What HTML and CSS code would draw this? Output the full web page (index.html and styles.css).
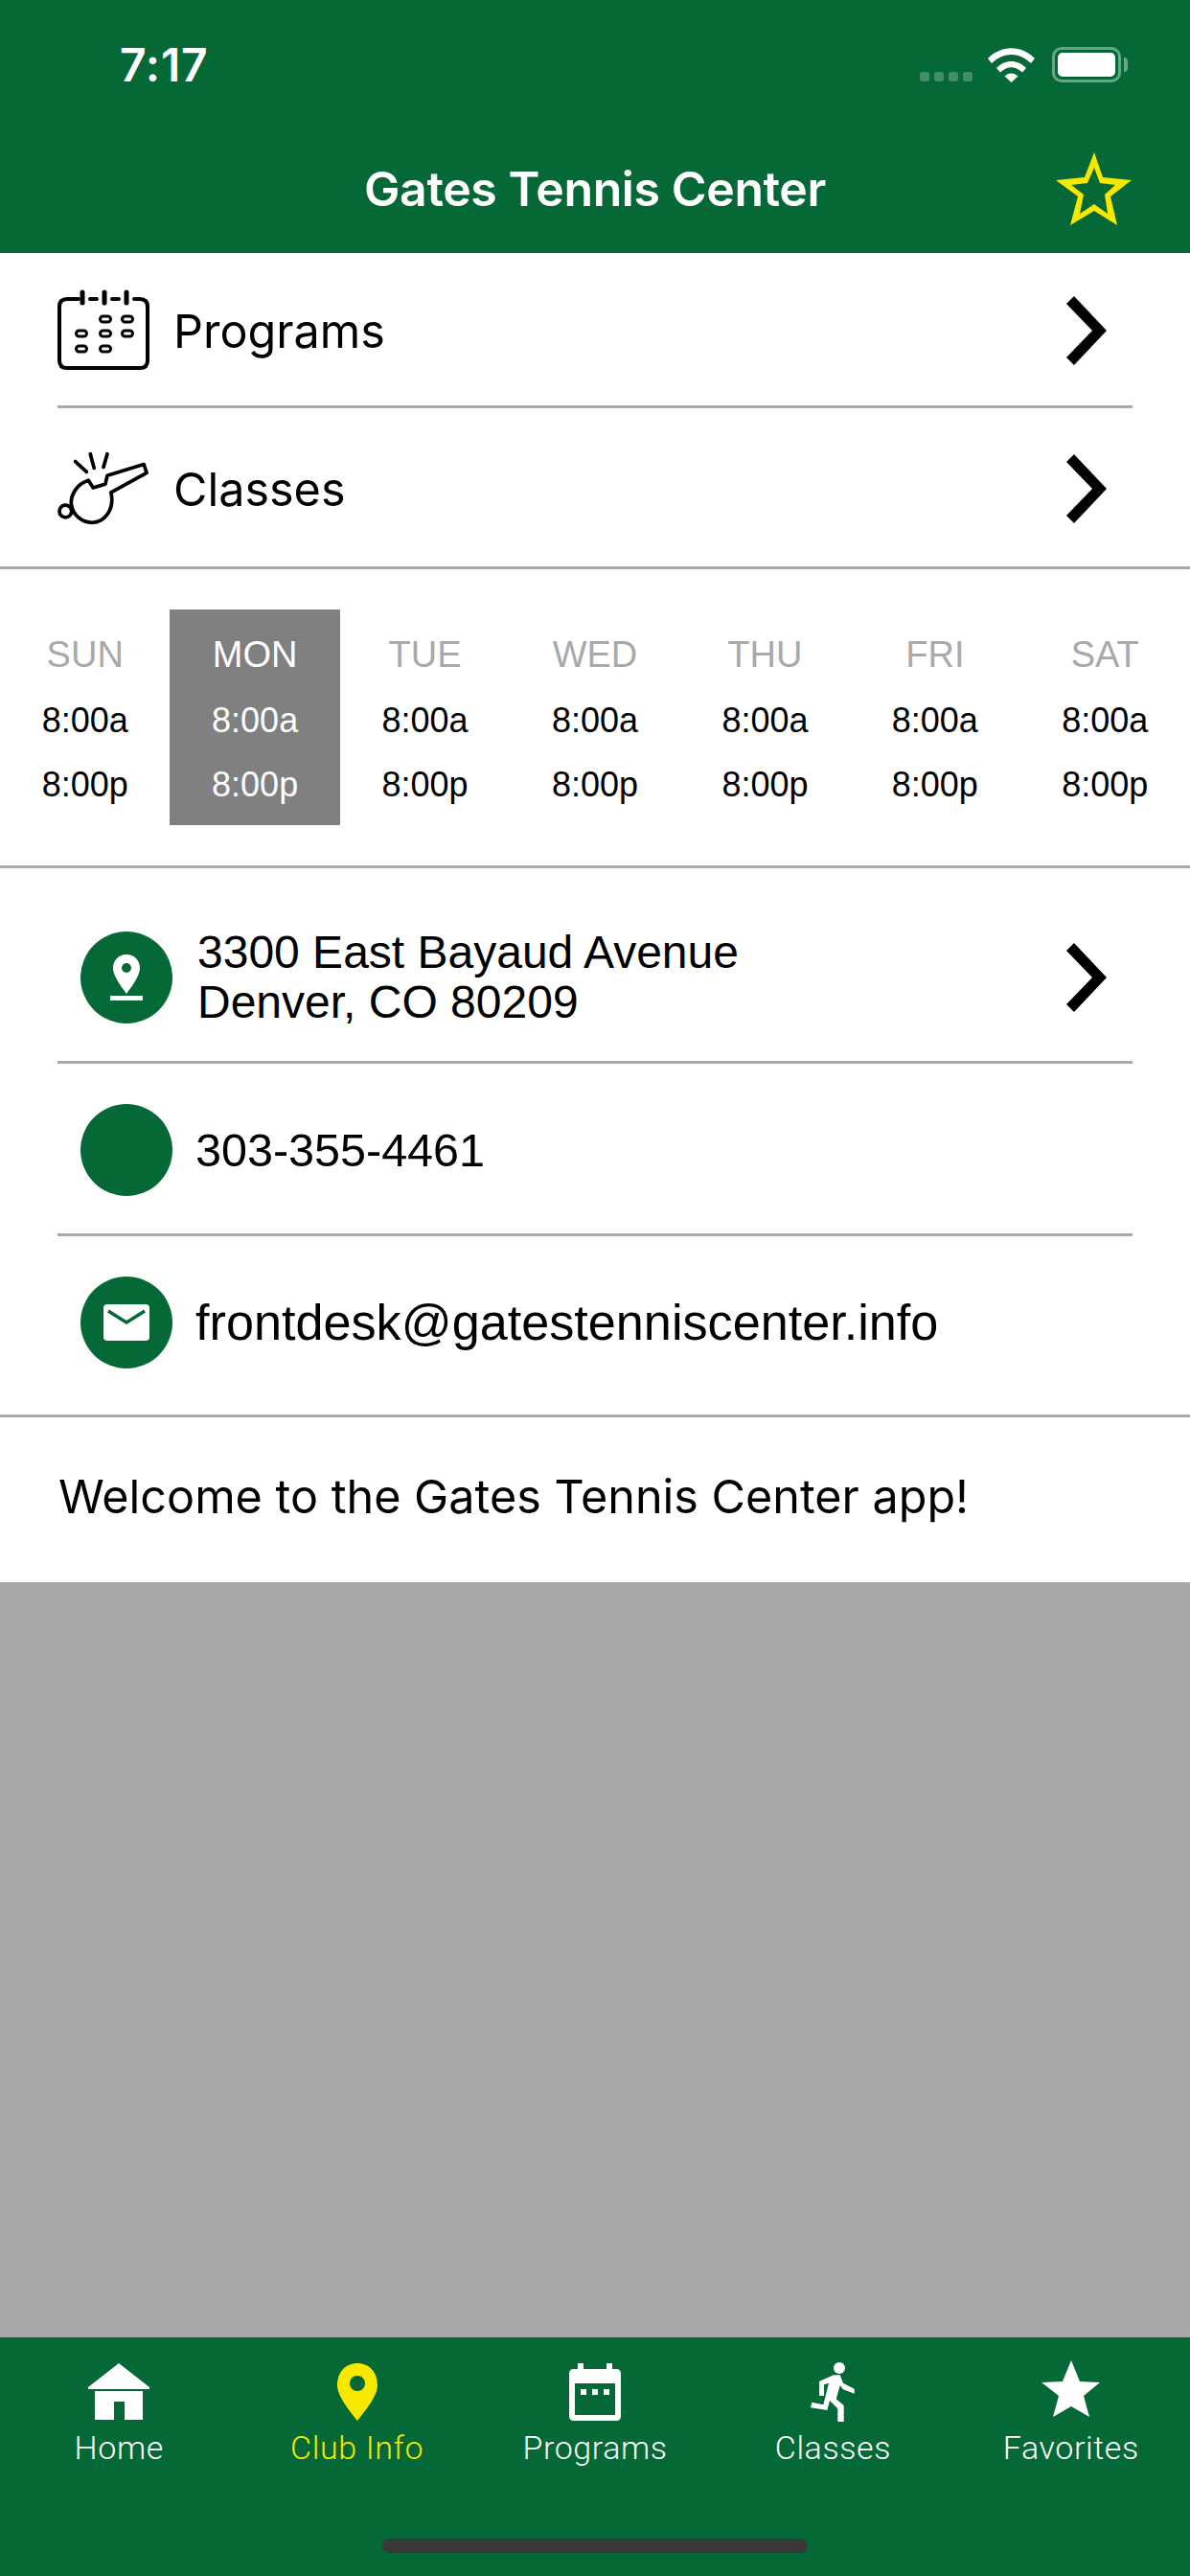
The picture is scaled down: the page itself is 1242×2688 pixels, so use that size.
FILE: index.html
```html
<!DOCTYPE html>
<html lang="en">

<head>
    <meta charset="UTF-8">
    <meta name="viewport" content="width=device-width, initial-scale=1.0">
    <title>Gates Tennis Center</title>
    <link rel="stylesheet" href="styles.css">
</head>

<body>

    <div class="app">
        <header class="header">
            <div class="status">
                <span class="status__time">7:17</span>
                <div class="status__icons">
                    <div class="signal"><i></i><i></i><i></i><i></i></div>
                    <svg class="wifi" width="49" height="36" viewBox="0 0 49 36">
                        <path fill="#fff" d="M0 11 C14 -3.500 35 -3.500 49 11 L45 16 C32 4 17 4 4 16Z M9 21 C18 11.500 31 11.500 40 21 L36 25.500 C28 18.500 21 18.500 13 25.500Z M17.500 29.500 C22 25.500 27 25.500 31.500 29.500 L24.500 36Z"/>
                    </svg>
                    <div class="battery"><div class="battery__level"></div></div>
                </div>
            </div>
            <div class="navbar">
                <h1 class="navbar__title">Gates Tennis Center</h1>
                <svg class="navbar__star" width="80" height="76" viewBox="0 0 80 76">
                    <path fill="#f7e800" fill-rule="evenodd" d="M40 0 L49 26 L79 29 L57 46 L64 76 L40 61 L15 76 L23 46 L0 29 L30 26Z M40 16 L46 32 L62 34 L51 44 L54 64 L40 54 L25 64 L29 44 L16 34 L33 32Z"/>
                </svg>
            </div>
        </header>

        <section class="links">
            <a class="links__row links__row--first">
                <svg class="links__icon" width="96" height="86" viewBox="0 0 96 86" fill="none" stroke="#000" stroke-linecap="round">
                    <path stroke-width="4" d="M22 10 H10 Q2 10 2 18 V74 Q2 82 10 82 H86 Q94 82 94 74 V18 Q94 10 86 10 H80"/>
                    <path stroke-width="4" d="M34 10 H41 M57 10 H64"/>
                    <path stroke-width="5" d="M26 3 V14 M49 3 V14 M72 3 V14"/>
                    <g stroke-width="3">
                        <rect x="44.500" y="28" width="11" height="6" rx="3"/>
                        <rect x="67.500" y="28" width="11" height="6" rx="3"/>
                        <rect x="19.500" y="43" width="11" height="6" rx="3"/>
                        <rect x="44.500" y="43" width="11" height="6" rx="3"/>
                        <rect x="67.500" y="43" width="11" height="6" rx="3"/>
                        <rect x="19.500" y="59" width="11" height="6" rx="3"/>
                        <rect x="44.500" y="59" width="11" height="6" rx="3"/>
                    </g>
                </svg>
                <span class="links__label">Programs</span>
                <svg class="chevron" width="42" height="72" viewBox="0 0 42 72"><path d="M8 0 L42 36 L8 72 L0 64 L27 36 L0 8Z"/></svg>
            </a>
            <div class="divider"></div>
            <a class="links__row">
                <svg class="links__icon" width="96" height="78" viewBox="0 0 98 78" fill="none" stroke="#000" stroke-width="3.800" stroke-linejoin="round" stroke-linecap="round">
                    <circle cx="8.500" cy="63" r="6.500"/>
                    <path d="M33 30 C20 34 13 47 15 57 C17 68 27 75 37 75 C51 75 61 60 57 43 L95 22 L92 13 L53 25 L51 34 L38 38 Z"/>
                    <path d="M19 10 L31 21 M35 2 L39 17 M53 2 L49 16"/>
                </svg>
                <span class="links__label">Classes</span>
                <svg class="chevron" width="42" height="72" viewBox="0 0 42 72"><path d="M8 0 L42 36 L8 72 L0 64 L27 36 L0 8Z"/></svg>
            </a>
        </section>

        <section class="hours">
            <div class="hours__day"><span class="hours__name">SUN</span><span>8:00a</span><span>8:00p</span></div>
            <div class="hours__day hours__day--today"><span class="hours__name">MON</span><span>8:00a</span><span>8:00p</span></div>
            <div class="hours__day"><span class="hours__name">TUE</span><span>8:00a</span><span>8:00p</span></div>
            <div class="hours__day"><span class="hours__name">WED</span><span>8:00a</span><span>8:00p</span></div>
            <div class="hours__day"><span class="hours__name">THU</span><span>8:00a</span><span>8:00p</span></div>
            <div class="hours__day"><span class="hours__name">FRI</span><span>8:00a</span><span>8:00p</span></div>
            <div class="hours__day"><span class="hours__name">SAT</span><span>8:00a</span><span>8:00p</span></div>
        </section>

        <section class="contact">
            <div class="contact__row">
                <div class="contact__circle">
                    <svg width="34" height="48" viewBox="0 0 34 48">
                        <path fill="#fff" fill-rule="evenodd" d="M17 0 C8 0 3 7 3 14 C3 22 11 33 17 41 C23 33 31 22 31 14 C31 7 26 0 17 0Z M17 9 A5 5 0 1 1 17 19 A5 5 0 1 1 17 9Z"/>
                        <rect x="0" y="43" width="34" height="5" fill="#fff"/>
                    </svg>
                </div>
                <div class="contact__text contact__text--address">3300 East Bayaud Avenue<br>Denver, CO 80209</div>
                <svg class="chevron" width="42" height="72" viewBox="0 0 42 72"><path d="M8 0 L42 36 L8 72 L0 64 L27 36 L0 8Z"/></svg>
            </div>
            <div class="divider"></div>
            <div class="contact__row">
                <div class="contact__circle"></div>
                <div class="contact__text contact__text--phone">303-355-4461</div>
            </div>
            <div class="divider"></div>
            <div class="contact__row">
                <div class="contact__circle">
                    <svg width="48" height="38" viewBox="0 0 48 38">
                        <rect width="48" height="38" rx="4" fill="#fff"/>
                        <path fill="none" stroke="#056937" stroke-width="3.500" d="M5 7 L24 19 L43 7"/>
                    </svg>
                </div>
                <div class="contact__text contact__text--mail">frontdesk@gatestenniscenter.info</div>
            </div>
        </section>

        <section class="welcome">Welcome to the Gates Tennis Center app!</section>

        <div class="filler"></div>

        <nav class="tabs">
            <div class="tabs__row">
                <a class="tabs__item">
                    <svg width="66" height="64" viewBox="0 -3 66 64">
                        <path fill="#fff" d="M33 0 L65 25 V27 H1 V25Z M8 29 H58 V59 H39 V40 H28 V59 H8Z"/>
                    </svg>
                    <span>Home</span>
                </a>
                <a class="tabs__item tabs__item--active">
                    <svg width="42" height="64" viewBox="0 -3 42 64">
                        <path fill="#f7e800" fill-rule="evenodd" d="M21 0 C9 0 0 9 0 23 C0 34 13 50 21 60 C29 50 42 34 42 23 C42 9 33 0 21 0Z M21 13 C25.500 13 29 16.500 29 21 C29 25.500 25.500 29 21 29 C16.500 29 13 25.500 13 21 C13 16.500 16.500 13 21 13Z"/>
                    </svg>
                    <span>Club Info</span>
                </a>
                <a class="tabs__item">
                    <svg width="54" height="64" viewBox="0 -3 54 64">
                        <path fill="#fff" fill-rule="evenodd" d="M9 0 H15 V6 H39 V0 H45 V6 H49 Q54 6 54 11 V55 Q54 60 49 60 H5 Q0 60 0 55 V11 Q0 6 5 6 H9Z M6 21 V54 H48 V21Z"/>
                        <path fill="#fff" d="M12 27 H18 V33 H12Z M24 27 H30 V33 H24Z M36 27 H42 V33 H36Z"/>
                    </svg>
                    <span>Programs</span>
                </a>
                <a class="tabs__item">
                    <svg width="46" height="64" viewBox="0 0 46 64">
                        <circle cx="30" cy="8" r="6" fill="#fff"/>
                        <path fill="#fff" d="M9 22 L24 15.300 H30.700 L34 23.700 L45.700 29.700 V34.700 L34 30.300 L30.700 26.300 L26.700 40.300 L34.700 47 V64 H28.300 V50.300 L20 42 L17.300 52 L0 49.300 L1.300 43.700 L13.300 46.300 L19 23.700 L14 25.300 V37 H9Z"/>
                    </svg>
                    <span>Classes</span>
                </a>
                <a class="tabs__item">
                    <svg width="62" height="64" viewBox="0 0 62 64">
                        <path fill="#fff" d="M31 0 L40 22 L61 23 L44 37 L50 59 L31 48 L12 59 L18 37 L0 23 L22 22Z"/>
                    </svg>
                    <span>Favorites</span>
                </a>
            </div>
            <div class="tabs__indicator"></div>
        </nav>
    </div>

</body>

</html>
```

FILE: styles.css
```css
/* CSS Reset */
html {
    box-sizing: border-box;
}

*,
*:before,
*:after {
    box-sizing: inherit;
}

body,
h1 {
    margin: 0;
    padding: 0;
    font-weight: normal;
}

body {
    font-family: "Inter", "Liberation Sans", sans-serif;
    color: #000;
}

svg {
    display: block;
    flex-shrink: 0;
}

.app {
    display: flex;
    flex-direction: column;
    width: 1242px;
    height: 2688px;
    overflow: hidden;
    background: #fff;
}

/* Green header with the status bar */
.header {
    height: 264px;
    background: #056937;
    color: #fff;
}

.status {
    display: flex;
    justify-content: space-between;
    align-items: center;
    height: 134px;
    padding: 0 72px 0 125px;
}

.status__time {
    font-size: 48px;
    font-weight: 600;
    letter-spacing: .8px;
}

.status__icons {
    display: flex;
    align-items: flex-end;
}

.signal {
    display: flex;
    gap: 5px;
    margin-right: 16px;
    padding-bottom: 1px;
}

.signal i {
    width: 10px;
    height: 10px;
    border-radius: 3px;
    background: rgba(255, 255, 255, .25);
}

.battery {
    position: relative;
    width: 72px;
    height: 37px;
    margin-left: 18px;
    padding: 3px;
    border: 3px solid rgba(255, 255, 255, .4);
    border-radius: 10px;
}

.battery:after {
    content: "";
    position: absolute;
    right: -10px;
    top: 8px;
    width: 4px;
    height: 15px;
    border-radius: 0 4px 4px 0;
    background: rgba(255, 255, 255, .4);
}

.battery__level {
    height: 100%;
    border-radius: 5px;
    background: #fff;
}

.navbar {
    display: flex;
    justify-content: center;
    align-items: center;
    position: relative;
    height: 130px;
    padding-bottom: 5px;
}

.navbar__title {
    font-size: 50px;
    font-weight: 600;
    letter-spacing: -.4px;
}

.navbar__star {
    position: absolute;
    right: 60px;
    top: 25px;
}

/* Programs and Classes links */
.links {
    padding: 0 60px;
    border-bottom: 3px solid #a9a9a9;
}

.links__row {
    display: flex;
    align-items: center;
    height: 165px;
    padding: 3px 27px 0 0;
}

.links__row--first {
    height: 159px;
}

.links__icon {
    margin-right: 25px;
}

.links__label {
    flex: 1;
    font-size: 48.500px;
}

.divider {
    height: 3px;
    background: #a9a9a9;
}

/* Opening hours */
.hours {
    display: grid;
    grid-template-columns: repeat(7, 1fr);
    height: 312px;
    padding: 42px 0;
    border-bottom: 3px solid #a9a9a9;
    font-family: "Liberation Sans", Arial, sans-serif;
    font-size: 36px;
}

.hours__day {
    display: flex;
    flex-direction: column;
    align-items: center;
    padding-top: 26px;
    gap: 25px;
    line-height: 42px;
}

.hours__name {
    font-size: 38px;
    color: #a9a9a9;
    margin-bottom: 2px;
}

.hours__day--today {
    background: #808080;
    color: #fff;
}

.hours__day--today .hours__name {
    color: #fff;
}

/* Address, phone and mail */
.contact {
    padding: 24px 60px 9px;
    border-bottom: 3px solid #a9a9a9;
    font-family: "Liberation Sans", Arial, sans-serif;
}

.contact__row {
    display: flex;
    align-items: center;
    height: 177px;
    padding: 3px 27px 0 24px;
}

.contact__circle {
    display: flex;
    justify-content: center;
    align-items: center;
    width: 96px;
    height: 96px;
    margin-right: 24px;
    border-radius: 50%;
    background: #056937;
}

.contact__text {
    flex: 1;
    font-size: 48px;
}

.contact__text--address {
    line-height: 52px;
    padding-left: 2px;
}

.contact__text--phone {
    font-size: 48.500px;
}

.contact__text--mail {
    font-size: 52.200px;
}

/* Welcome text */
.welcome {
    height: 172px;
    padding-left: 61px;
    font-size: 48.500px;
    line-height: 166px;
}

.filler {
    flex: 1;
    background: #a9a9a9;
}

/* Bottom tab bar */
.tabs {
    height: 249px;
    background: #056937;
    color: #fff;
}

.tabs__row {
    display: flex;
    height: 210px;
}

.tabs__item {
    flex: 1;
    display: flex;
    flex-direction: column;
    align-items: center;
    padding-top: 24px;
    font-family: "Roboto", sans-serif;
    font-size: 34px;
    font-weight: 300;
    letter-spacing: .6px;
}

.tabs__item svg {
    margin-bottom: 7px;
}

.tabs__item--active {
    color: #f7e800;
}

.tabs__indicator {
    width: 444px;
    height: 15px;
    margin: 0 auto;
    border-radius: 8px;
    background: #383838;
}
```
